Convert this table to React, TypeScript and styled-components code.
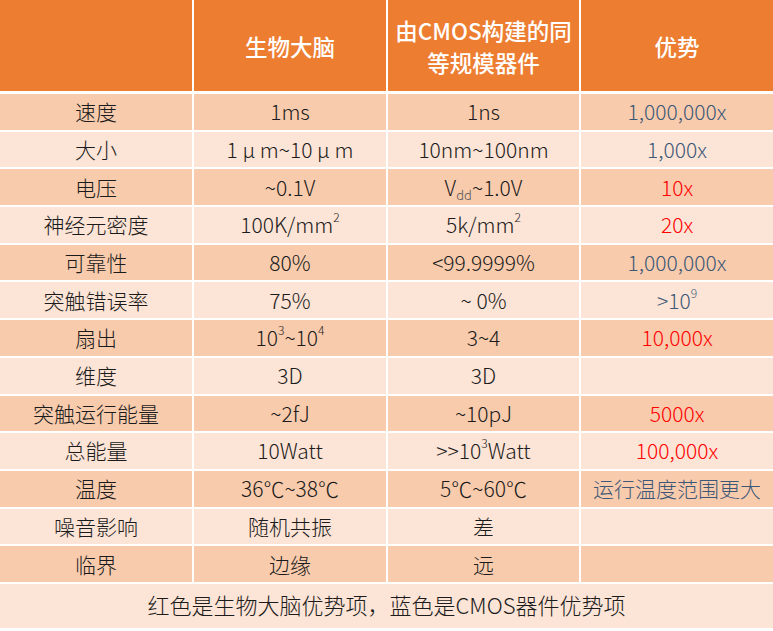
import React from "react";
import styled, { createGlobalStyle } from "styled-components";

const GlobalStyle = createGlobalStyle`
  html, body {
    margin: 0;
    padding: 0;
    background: #ffffff;
  }
  body {
    font-family: "Noto Sans CJK SC", "Noto Sans", sans-serif;
  }
`;

const Table = styled.div`
  width: 773px;
  height: 631px;
  display: flex;
  flex-direction: column;
  gap: 3px;
  background: #ffffff;
  overflow: hidden;
`;

const Grid = styled.div`
  display: grid;
  grid-template-columns: 192px 192px 191px 192px;
  column-gap: 2px;
  row-gap: 2px;
`;

const HeadCell = styled.div`
  height: 91px;
  background: #ed7d31;
  color: #ffffff;
  font-size: 22.5px;
  font-weight: 500;
  line-height: 32px;
  display: flex;
  align-items: center;
  justify-content: center;
  text-align: center;
`;

const Cell = styled.div<{ $dark: boolean; $tone?: "red" | "blue" }>`
  height: 35.7px;
  background: ${(p) => (p.$dark ? "#f8cbad" : "#fce4d6")};
  color: ${(p) =>
    p.$tone === "red" ? "#ff0000" : p.$tone === "blue" ? "#3d5877" : "#1b1b1b"};
  font-size: 21px;
  font-weight: 300;
  display: flex;
  align-items: center;
  justify-content: center;
  white-space: nowrap;
`;

const Text = styled.span`
  display: inline-block;
  line-height: 1.2;
`;

const Footer = styled.div`
  grid-column: 1 / -1;
  height: 44px;
  background: #fce4d6;
  color: #1b1b1b;
  font-size: 22px;
  font-weight: 300;
  display: flex;
  align-items: center;
  justify-content: center;
  padding-bottom: 4px;
  box-sizing: border-box;
`;

const Sup = styled.sup`
  font-size: 12px;
  vertical-align: top;
  position: relative;
  top: -1px;
  line-height: 1;
`;

const Sub = styled.sub`
  font-size: 13px;
  vertical-align: -4px;
  line-height: 0;
  color: #555;
`;

type Tone = "red" | "blue" | undefined;
type Row = [React.ReactNode, React.ReactNode, React.ReactNode, React.ReactNode, Tone];

const rows: Row[] = [
  ["速度", "1ms", "1ns", "1,000,000x", "blue"],
  ["大小", "1 μ m~10 μ m", "10nm~100nm", "1,000x", "blue"],
  ["电压", "~0.1V", <>V<Sub>dd</Sub>~1.0V</>, "10x", "red"],
  ["神经元密度", <>100K/mm<Sup>2</Sup></>, <>5k/mm<Sup>2</Sup></>, "20x", "red"],
  ["可靠性", "80%", "<99.9999%", "1,000,000x", "blue"],
  ["突触错误率", "75%", "~ 0%", <>&gt;10<Sup>9</Sup></>, "blue"],
  ["扇出", <>10<Sup>3</Sup>~10<Sup>4</Sup></>, "3~4", "10,000x", "red"],
  ["维度", "3D", "3D", "", undefined],
  ["突触运行能量", "~2fJ", "~10pJ", "5000x", "red"],
  ["总能量", "10Watt", <>&gt;&gt;10<Sup>3</Sup>Watt</>, "100,000x", "red"],
  ["温度", "36℃~38℃", "5℃~60℃", "运行温度范围更大", "blue"],
  ["噪音影响", "随机共振", "差", "", undefined],
  ["临界", "边缘", "远", "", undefined],
];

export default function App() {
  return (
    <>
      <GlobalStyle />
      <Table>
        <Grid>
          <HeadCell />
          <HeadCell>生物大脑</HeadCell>
          <HeadCell>
            由CMOS构建的同
            <br />
            等规模器件
          </HeadCell>
          <HeadCell>优势</HeadCell>
        </Grid>
        <Grid>
          {rows.map(([name, brain, cmos, gain, tone], i) => {
            const dark = i % 2 === 0;
            return (
              <React.Fragment key={i}>
                <Cell $dark={dark}>
                  <Text>{name}</Text>
                </Cell>
                <Cell $dark={dark}>
                  <Text>{brain}</Text>
                </Cell>
                <Cell $dark={dark}>
                  <Text>{cmos}</Text>
                </Cell>
                <Cell $dark={dark} $tone={tone}>
                  <Text>{gain}</Text>
                </Cell>
              </React.Fragment>
            );
          })}
          <Footer>红色是生物大脑优势项，蓝色是CMOS器件优势项</Footer>
        </Grid>
      </Table>
    </>
  );
}
